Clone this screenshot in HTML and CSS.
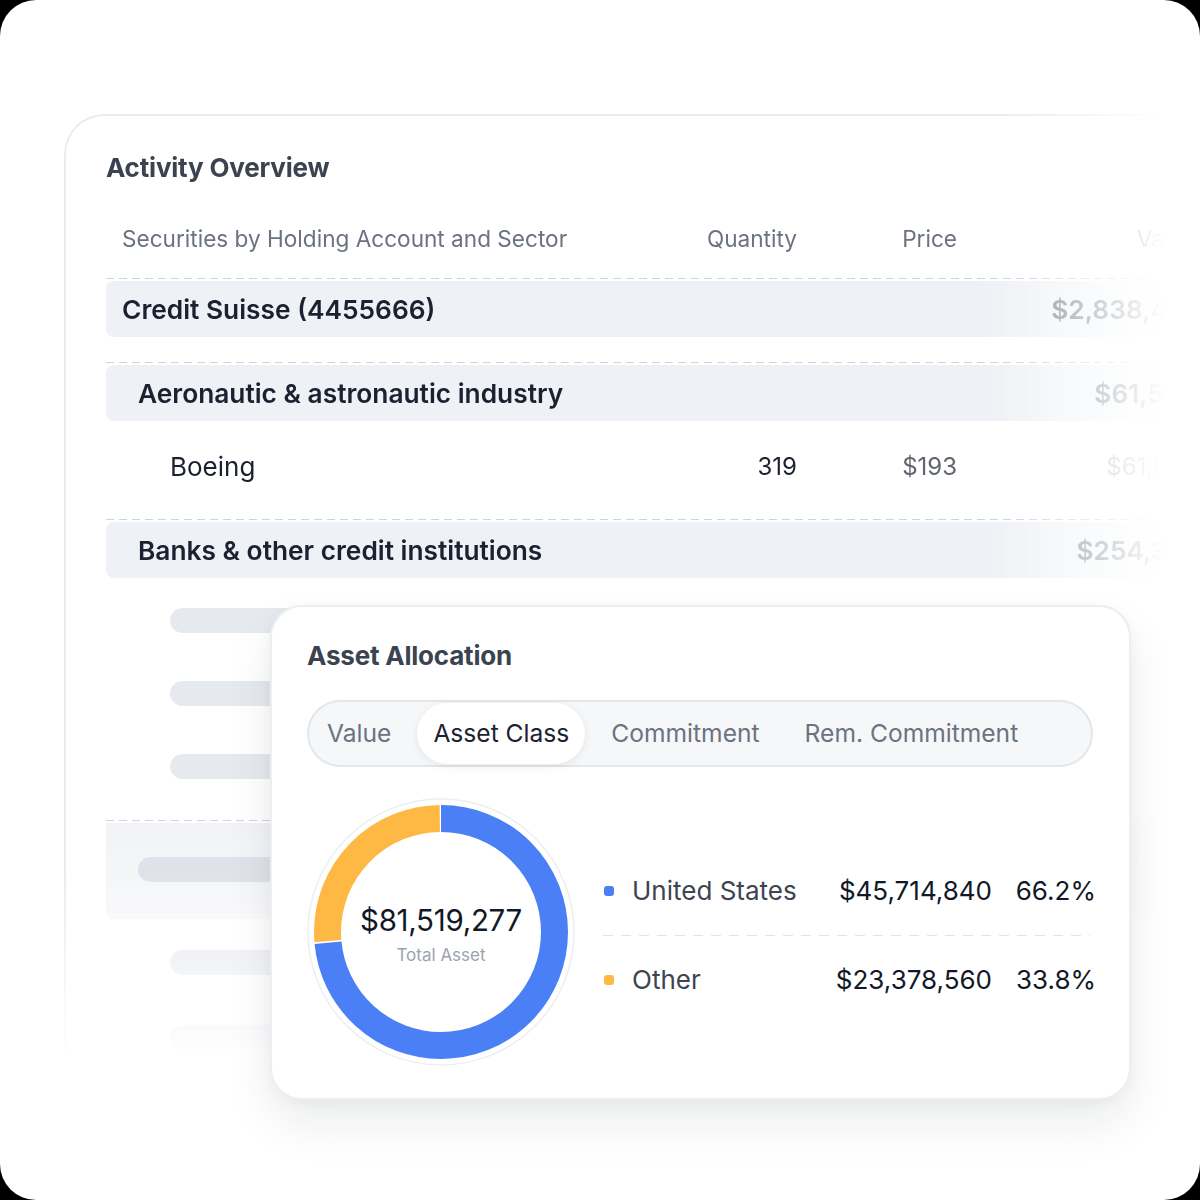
FILE: index.html
```html
<!DOCTYPE html>
<html lang="en">
<head>
<meta charset="utf-8">
<title>Activity Overview</title>
<link rel="stylesheet" href="styles.css">
</head>
<body>
<div class="frame">
  <div class="fade-y">
    <section class="activity">
      <h1 class="title">Activity Overview</h1>
      <div class="table">
        <div class="row head">
          <span class="name">Securities by Holding Account and Sector</span>
          <span class="num">Quantity</span>
          <span class="num">Price</span>
          <span class="num">Value</span>
        </div>
        <div class="group g1">
          <div class="row band lvl1">
            <span class="name">Credit Suisse (4455666)</span><span></span><span></span>
            <span class="num val">$2,838,461</span>
          </div>
        </div>
        <div class="group">
          <div class="row band lvl2">
            <span class="name">Aeronautic &amp; astronautic industry</span><span></span><span></span>
            <span class="num val">$61,567</span>
          </div>
          <div class="row item">
            <span class="name">Boeing</span>
            <span class="num">319</span>
            <span class="num muted">$193</span>
            <span class="num val light">$61,567</span>
          </div>
        </div>
        <div class="group">
          <div class="row band lvl2">
            <span class="name">Banks &amp; other credit institutions</span><span></span><span></span>
            <span class="num val">$254,310</span>
          </div>
          <div class="skeleton">
            <div class="bar"></div>
            <div class="bar"></div>
            <div class="bar"></div>
          </div>
        </div>
        <div class="group g4">
          <div class="ghost"><div class="bar wide"></div></div>
          <div class="skeleton loose">
            <div class="bar"></div>
            <div class="bar"></div>
          </div>
        </div>
      </div>
    </section>
  </div>

  <section class="alloc">
    <h2 class="alloc-title">Asset Allocation</h2>
    <div class="tabs">
      <span class="tab">Value</span>
      <span class="tab active">Asset Class</span>
      <span class="tab">Commitment</span>
      <span class="tab">Rem. Commitment</span>
    </div>
    <div class="chart">
      <div class="donut">
        <svg width="268" height="268" viewBox="0 0 268 268">
          <circle cx="134" cy="134" r="133" fill="none" stroke="#eceef2" stroke-width="1.5"/>
          <g transform="rotate(-90 134 134)">
            <circle cx="134" cy="134" r="113.5" fill="none" stroke="#4a7ff6" stroke-width="27" stroke-dasharray="523.4 713.1"/>
            <circle cx="134" cy="134" r="113.5" fill="none" stroke="#fdb944" stroke-width="27" stroke-dasharray="186.2 713.1" stroke-dashoffset="-525"/>
          </g>
        </svg>
        <div class="center">
          <div class="amount">$81,519,277</div>
          <div class="caption">Total Asset</div>
        </div>
      </div>
      <div class="legend">
        <div class="lrow">
          <span class="dot blue"></span>
          <span class="lname">United States</span>
          <span class="lval">$45,714,840</span>
          <span class="lpct">66.2%</span>
        </div>
        <div class="lsep"></div>
        <div class="lrow">
          <span class="dot yellow"></span>
          <span class="lname">Other</span>
          <span class="lval">$23,378,560</span>
          <span class="lpct">33.8%</span>
        </div>
      </div>
    </div>
  </section>
</div>
</body>
</html>
```

FILE: styles.css
```css
* { box-sizing: border-box; }
html, body { margin: 0; background: #000; }
body { font-family: Inter, "Noto Sans", "Liberation Sans", sans-serif; }

.frame {
  position: relative;
  width: 1200px;
  height: 1200px;
  background: #fff;
  border-radius: 36px;
  overflow: hidden;
  padding: 114px 0 0 64px;
}

.fade-y {
  height: 1000px;
  -webkit-mask-image: linear-gradient(to bottom, #000 0, #000 760px, transparent 946px);
  mask-image: linear-gradient(to bottom, #000 0, #000 760px, transparent 946px);
}

.activity {
  width: 1136px;
  height: 1000px;
  border: 2px solid #e8ecf1;
  border-right: 0;
  border-radius: 40px 0 0 40px;
  padding: 36px 0 0 40px;
  -webkit-mask-image: linear-gradient(to right, #000 0, #000 930px, transparent 1100px);
  mask-image: linear-gradient(to right, #000 0, #000 930px, transparent 1100px);
}

.title {
  margin: 0;
  font-size: 26px;
  line-height: 32px;
  font-weight: 700;
  color: #3c4350;
  letter-spacing: -0.2px;
}

.table { margin-top: 38px; width: 1090px; }

.row {
  display: grid;
  grid-template-columns: 1fr 160px 160px 239px;
  align-items: center;
}
.num { text-align: right; white-space: nowrap; }

.head {
  height: 32px;
  margin-bottom: 24px;
  font-size: 22.6px;
  color: #6b7280;
}
.head .name { padding-left: 16px; }

.group { position: relative; padding-top: 3px; }
.group::before {
  content: "";
  position: absolute;
  left: 0; right: 0; top: 0;
  height: 1px;
  background-image: linear-gradient(to right, #cfd4db 0 8px, transparent 8px 13px);
  background-size: 13px 1px;
}
.g1 { margin-bottom: 25px; }

.band {
  height: 56px;
  background: linear-gradient(to right, #eef1f5 0, #eef1f5 80%, rgba(238, 241, 245, 0.4) 100%);
  border-radius: 8px;
  font-size: 26.3px;
  font-weight: 600;
  color: #1b2130;
}
.lvl1 .name { padding-left: 16px; }
.lvl2 .name { padding-left: 32px; }

.item {
  height: 90px;
  margin-bottom: 8px;
  font-size: 26px;
  color: #1b2130;
}
.item .name { padding-left: 64px; }
.item .num { font-size: 24px; }
.muted { color: #5f6670; }

.val { color: #868c95; font-weight: 600; }
.val.light { font-weight: 400; color: #b3b7bd; }

.skeleton {
  display: flex;
  flex-direction: column;
  gap: 48px;
  padding: 30px 0 41px 64px;
}
.skeleton.loose { gap: 50px; padding-top: 31px; padding-bottom: 0; }

.bar {
  width: 280px;
  height: 25px;
  border-radius: 13px;
  background: #e6e9ee;
}
.bar.wide { width: 320px; background: #dfe3e9; }

.ghost {
  height: 96px;
  padding: 34px 0 0 32px;
  background: linear-gradient(to bottom, #f1f3f6, #f7f8fa);
  border-radius: 0 0 8px 8px;
}

/* Asset allocation card */
.alloc {
  position: absolute;
  left: 270px;
  top: 605px;
  width: 861px;
  height: 495px;
  background: #fff;
  border: 2px solid #eceef2;
  border-radius: 32px;
  padding: 33px 36px 0 35px;
  box-shadow: 0 24px 48px rgba(16, 24, 40, 0.08), 0 4px 14px rgba(16, 24, 40, 0.04);
}

.alloc-title {
  margin: 0;
  font-size: 26px;
  line-height: 32px;
  font-weight: 700;
  color: #3c4350;
  letter-spacing: -0.2px;
}

.tabs {
  margin-top: 28px;
  height: 67px;
  border: 2px solid #e3e6ea;
  border-radius: 34px;
  background: #f6f7f9;
  display: flex;
  gap: 10px;
  padding: 1px 2px;
}
.tab {
  height: 61px;
  line-height: 61px;
  padding: 0 16px;
  border-radius: 31px;
  font-size: 24.6px;
  color: #6b7280;
  white-space: nowrap;
}
.tab:last-child { margin-left: 3px; }
.tab.active {
  background: #fff;
  color: #1b2130;
  box-shadow: 0 2px 8px rgba(16, 24, 40, 0.08);
}

.chart {
  display: flex;
  align-items: center;
  margin-top: 31px;
}
.donut {
  position: relative;
  width: 268px;
  height: 268px;
  flex: none;
}
.donut svg { display: block; }
.center {
  position: absolute;
  inset: 0;
  display: flex;
  flex-direction: column;
  align-items: center;
  justify-content: center;
  padding-top: 4px;
}
.amount {
  font-size: 29.5px;
  line-height: 36px;
  color: #111827;
  letter-spacing: -0.3px;
}
.caption {
  margin-top: 6px;
  font-size: 17px;
  line-height: 22px;
  color: #9ca3af;
}

.legend {
  flex: 1;
  margin-left: 28px;
  margin-right: -3px;
  margin-top: 6px;
}
.lrow {
  display: flex;
  align-items: center;
  height: 44px;
  font-size: 26px;
}
.dot {
  width: 10px;
  height: 10px;
  border-radius: 3px;
  margin: 0 18px 0 1px;
  flex: none;
}
.dot.blue { background: #4a7ff6; }
.dot.yellow { background: #fdb944; }
.lname { flex: 1; color: #3d4452; }
.lval { color: #111827; }
.lpct { width: 104px; text-align: right; color: #111827; }
.lsep {
  height: 1px;
  margin: 22px 6px 22px 0;
  background-image: linear-gradient(to right, #e1e4e8 0 10px, transparent 10px 18px);
  background-size: 18px 1px;
}
```
